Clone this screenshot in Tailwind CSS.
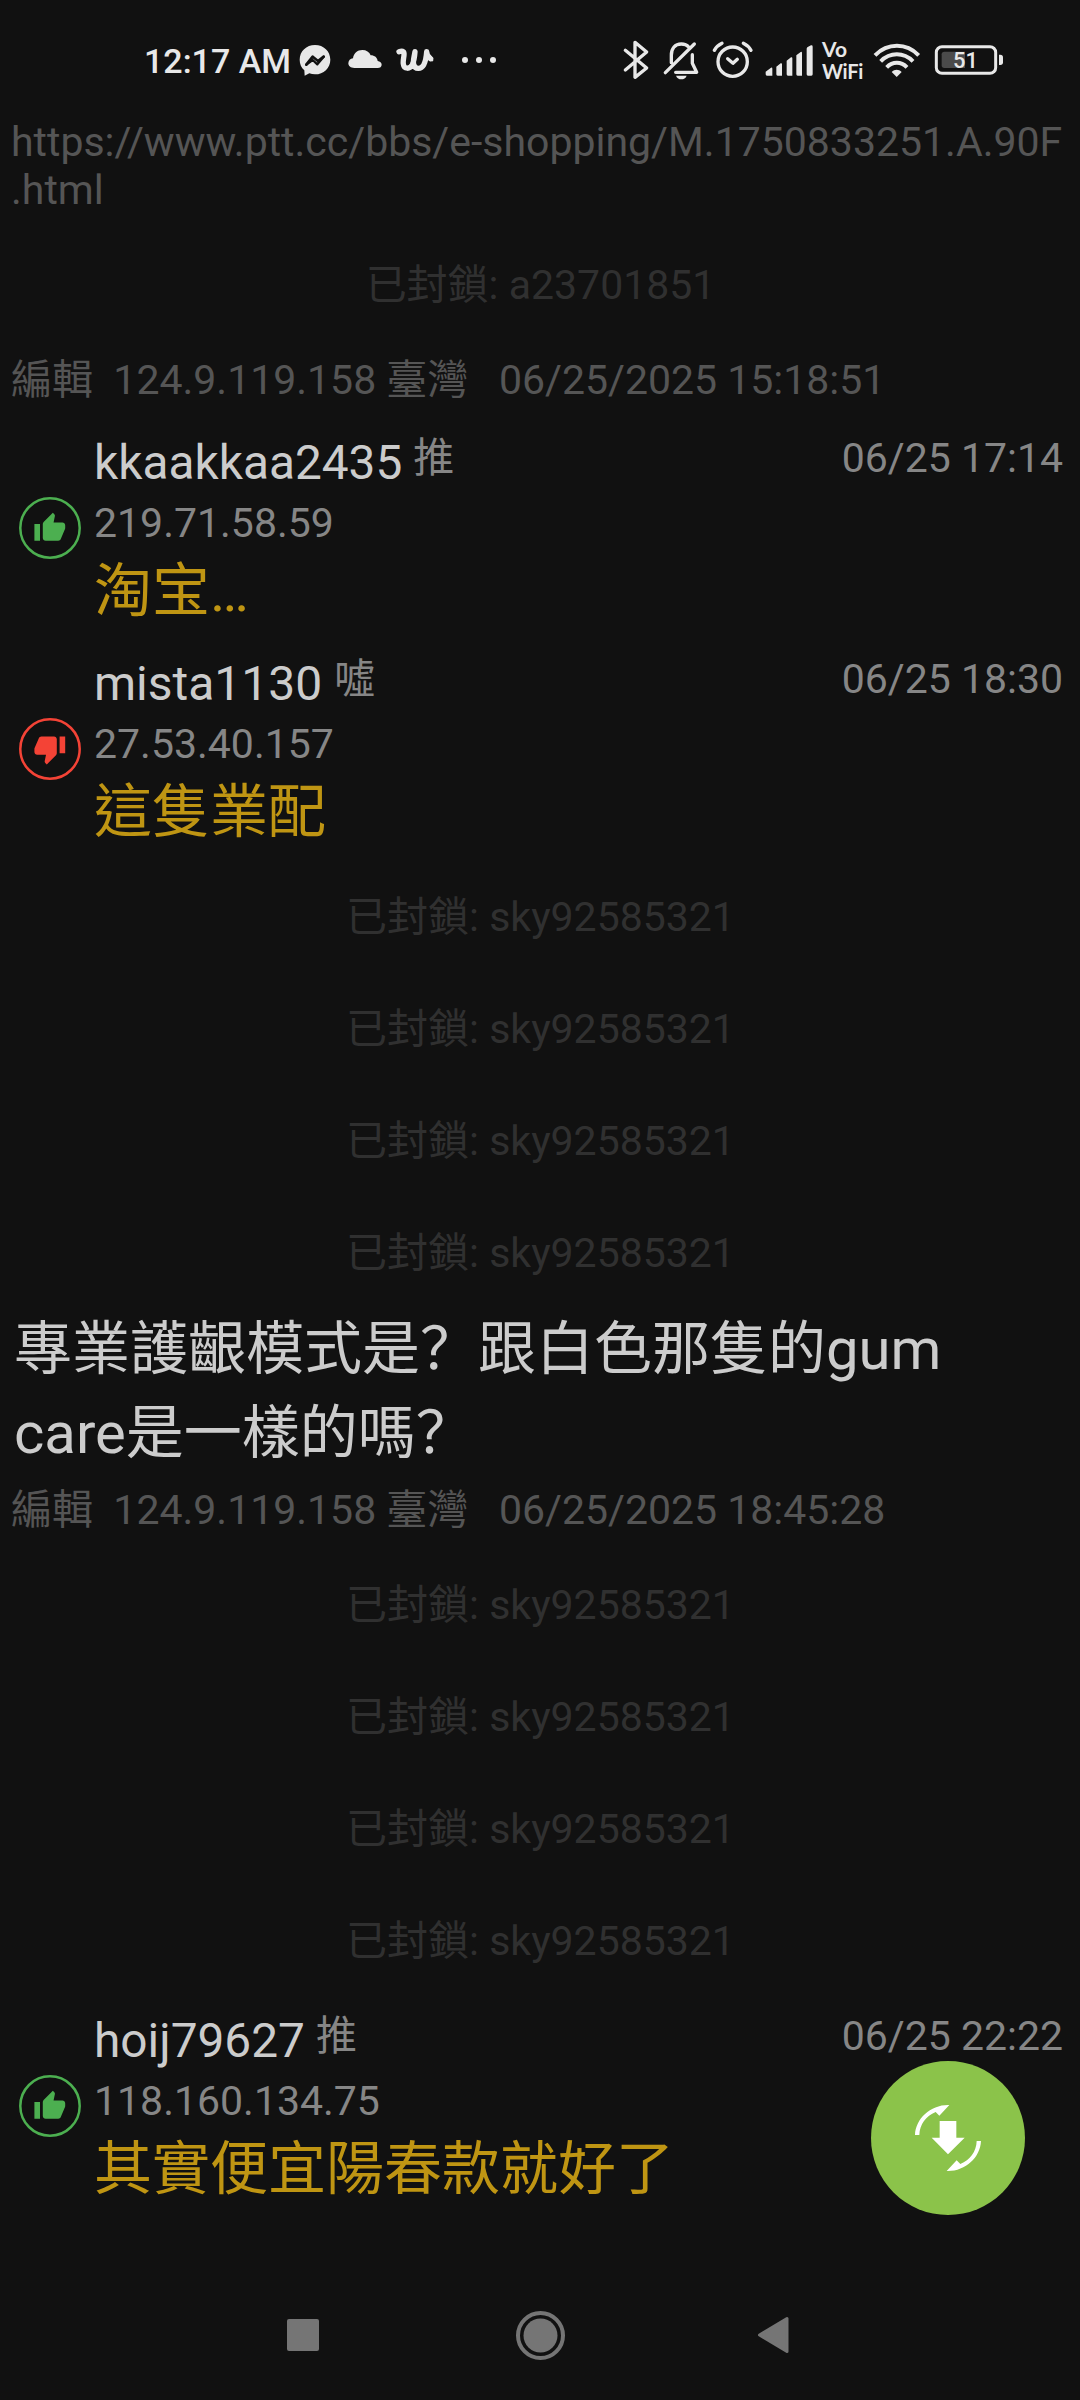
<!DOCTYPE html>
<html lang="zh-Hant">
<head>
<meta charset="utf-8">
<title>PTT</title>
<script src="https://cdn.jsdelivr.net/npm/@tailwindcss/browser@4"></script>
</head>
<body class="bg-[#111111]">
<div class="relative flex h-[2400px] w-[1080px] flex-col overflow-hidden bg-[#111111] font-[Roboto,'Noto_Sans_CJK_TC',sans-serif] text-[41px] text-[#868686]">

  <!-- status bar -->
  <header class="flex h-[100px] shrink-0 items-start pt-5 pl-[144px] text-[#e8e8e8]">
    <span class="w-[154px] pt-px text-[34px] leading-[80px] font-medium whitespace-nowrap">12:17 AM</span>
    <svg class="h-20 w-[34px]" viewBox="504 0 102 240" fill="currentColor"><path d="M555 75c-26 0-46 19-46 44 0 13 5 24 14 32l1 16 14-7c5 2 11 3 17 3 26 0 46-19 46-44s-20-44-46-44z"/><path d="M529 134l19-24 16 13 17-13" fill="none" stroke="#111" stroke-width="8" stroke-linejoin="round" stroke-linecap="round"/><path d="M529 134l19-14 14 13 19-23" fill="none" stroke="#111" stroke-width="7" stroke-linejoin="round" stroke-linecap="round"/></svg>
    <svg class="ml-3.5 h-20 w-[38px]" viewBox="648 0 114 240" fill="currentColor"><path d="M673 144c-11 0-18-6-18-14s6-14 14-15c2-15 13-25 28-25 12 0 21 6 25 16 12 0 20 7 21 17 7 1 12 5 12 11s-5 10-12 10z"/></svg>
    <svg class="ml-3 h-20 w-[38px]" viewBox="798 0 114 240" fill="none" stroke="currentColor" stroke-linecap="round" stroke-linejoin="round"><path d="M807 95q14-5 15 5c1 12-4 20-2 32 2 17 20 16 27 2 5-11 7-24 8-39-2 15-7 25-4 38 4 16 22 16 30 2 6-11 8-25 9-40 0 9 4 16 12 21" stroke-width="16"/><path d="M902 112l4 8" stroke-width="8"/></svg>
    <svg class="ml-[26px] h-20 w-[38px]" viewBox="990 0 114 240" fill="currentColor"><circle cx="1005" cy="120" r="9"/><circle cx="1047" cy="120" r="9"/><circle cx="1089" cy="120" r="9"/></svg>

    <svg class="ml-[124px] h-20 w-7" viewBox="66 0 84 240" fill="none" stroke="currentColor" stroke-width="10" stroke-linejoin="round" stroke-linecap="round"><path d="M76 91l64 53-35 28V67l35 29-64 54"/></svg>
    <svg class="ml-3 h-20 w-[38px]" viewBox="186 0 114 240" fill="none" stroke="currentColor" stroke-width="10" stroke-linejoin="round" stroke-linecap="round"><path d="M283 72l-87 86M214 128v-22c0-20 11-34 30-34 10 0 17 3 22 9M277 104v26l13 27h-63"/><path d="M228 167h32c-3 8-9 11-16 11s-13-3-16-11z" fill="currentColor" stroke="none"/></svg>
    <svg class="ml-[11px] h-20 w-[43px]" viewBox="333 0 129 240" fill="none" stroke="currentColor" stroke-width="10" stroke-linecap="round" stroke-linejoin="round"><circle cx="398" cy="125" r="44"/><path d="M383 116l16 14 13-12"/><path d="M343 91c5-9 13-16 23-21M453 91c-5-9-13-16-23-21"/></svg>
    <svg class="ml-2.5 h-20 w-[50px]" viewBox="492 0 150 240" fill="currentColor"><path d="M497 155l16-12q4-2 4 3v21h-16q-4 0-4-4zM529 140l13-10q4-2 4 3v34h-13q-4 0-4-4zM560 122l13-10q4-2 4 3v52h-13q-4 0-4-4zM589 106l13-10q4-2 4 3v68h-13q-4 0-4-4zM620 86q0-3 3-5l10-5q5-1 5 4v83q0 4-4 4h-10q-4 0-4-4z"/></svg>
    <div class="ml-2 w-[50px] pt-[18px] font-[Lato,sans-serif] text-[21px] leading-[22px] font-bold"><div>Vo</div><div class="text-[20px] tracking-[-0.3px]">WiFi</div></div>
    <svg class="h-20 w-[50px]" viewBox="816 0 150 240" fill="none" stroke="currentColor" stroke-width="12"><path d="M825 106c38-38 94-38 131 0M842 124c28-28 69-28 97 0M860 142c18-18 43-18 61 0"/><path d="M890 171l-15-15c9-9 21-9 30 0z" fill="currentColor" stroke="none"/></svg>
    <div class="relative ml-[11px] h-20 w-[72px]">
      <svg class="h-20 w-[72px]" viewBox="999 0 216 240" fill="none"><rect x="1009" y="80" width="178" height="80" rx="17" stroke="currentColor" stroke-width="9"/><path d="M1033 95h62v49h-62q-8 0-8-8v-33q0-8 8-8z" fill="#4b4b4b"/><path d="M1197 104h4q8 0 8 8v15q0 8-8 8h-4z" fill="currentColor"/></svg>
      <span class="absolute inset-y-0 left-[20px] text-[22px] leading-[82px] font-medium">51</span>
    </div>
  </header>

  <main class="flex flex-col">
    <p class="h-[131px] pt-[18px] pl-[11px] leading-12 whitespace-nowrap text-[#555555]">https://www.ptt.cc/bbs/e-shopping/M.1750833251.A.90F<br>.html</p>
    <p class="h-28 pl-px text-center leading-[108px] text-[#303030]">已封鎖: a23701851</p>
    <p class="h-[78px] pt-[13px] pl-[11px] leading-12 whitespace-pre text-[#555555]">編輯  124.9.119.158 臺灣   06/25/2025 15:18:51</p>

    <article class="flex h-[221px] pr-[17px] pl-[19px]">
      <svg class="mt-[76px] size-[62px] text-[#4caf50]" viewBox="0 0 62 62" fill="currentColor"><circle cx="31" cy="31" r="29.7" fill="none" stroke="currentColor" stroke-width="2.5"/><path transform="translate(14 14.300) scale(1.4)" d="M1 21h4V9H1v12zm22-11c0-1.1-.9-2-2-2h-6.31l.95-4.57.03-.32c0-.41-.17-.79-.44-1.06L14.17 1 7.59 7.59C7.22 7.95 7 8.45 7 9v10c0 1.1.9 2 2 2h9c.83 0 1.54-.5 1.84-1.22l3.02-7.05c.09-.23.14-.47.14-.73v-2z"/></svg>
      <div class="ml-[13px] flex-1">
        <div class="flex items-start pt-[13px]"><span class="pt-px text-[47.800px] leading-14 text-[#cccccc]">kkaakkaa2435</span><span class="ml-[11px] leading-12">推</span><time class="ml-auto leading-12">06/25 17:14</time></div>
        <p class="mt-2 leading-12">219.71.58.59</p>
        <p class="mt-2.5 text-[58px] leading-[68px] text-[#bf9513]">淘宝…</p>
      </div>
    </article>
    <article class="flex h-[221px] pr-[17px] pl-[19px]">
      <svg class="mt-[76px] size-[62px] text-[#f44336]" viewBox="0 0 62 62" fill="currentColor"><circle cx="31" cy="31" r="29.7" fill="none" stroke="currentColor" stroke-width="2.5"/><path transform="translate(14 14.300) scale(1.4)" d="M15 3H6c-.83 0-1.54.5-1.84 1.22l-3.02 7.05c-.09.23-.14.47-.14.73v2c0 1.1.9 2 2 2h6.31l-.95 4.57-.03.32c0 .41.17.79.44 1.06L9.83 23l6.59-6.59c.36-.36.58-.86.58-1.41V5c0-1.1-.9-2-2-2zm4 0v12h4V3h-4z"/></svg>
      <div class="ml-[13px] flex-1">
        <div class="flex items-start pt-[13px]"><span class="pt-px text-[48px] leading-14 text-[#cccccc]">mista1130</span><span class="ml-3 leading-12">噓</span><time class="ml-auto leading-12">06/25 18:30</time></div>
        <p class="mt-2 leading-12">27.53.40.157</p>
        <p class="mt-2.5 text-[58px] leading-[68px] text-[#bf9513]">這隻業配</p>
      </div>
    </article>

    <p class="h-28 pl-px text-center leading-[108px] text-[#303030]">已封鎖: sky92585321</p>
    <p class="h-28 pl-px text-center leading-[108px] text-[#303030]">已封鎖: sky92585321</p>
    <p class="h-28 pl-px text-center leading-[108px] text-[#303030]">已封鎖: sky92585321</p>
    <p class="h-28 pl-px text-center leading-[108px] text-[#303030]">已封鎖: sky92585321</p>

    <p class="-mt-1 h-[166px] pl-[14px] text-[58px] leading-[84px] whitespace-nowrap text-[#cccccc]">專業護齦模式是<span lang="zh-Hans" class="font-['Noto_Sans_CJK_SC'] leading-none">？</span>跟白色那隻的gum<br>care是一樣的嗎<span lang="zh-Hans" class="font-['Noto_Sans_CJK_SC'] leading-none">？</span></p>
    <p class="h-[78px] pt-[13px] pl-[11px] leading-12 whitespace-pre text-[#555555]">編輯  124.9.119.158 臺灣   06/25/2025 18:45:28</p>

    <p class="h-28 pl-px text-center leading-[108px] text-[#303030]">已封鎖: sky92585321</p>
    <p class="h-28 pl-px text-center leading-[108px] text-[#303030]">已封鎖: sky92585321</p>
    <p class="h-28 pl-px text-center leading-[108px] text-[#303030]">已封鎖: sky92585321</p>
    <p class="h-28 pl-px text-center leading-[108px] text-[#303030]">已封鎖: sky92585321</p>

    <article class="flex h-[221px] pr-[17px] pl-[19px]">
      <svg class="mt-[76px] size-[62px] text-[#4caf50]" viewBox="0 0 62 62" fill="currentColor"><circle cx="31" cy="31" r="29.7" fill="none" stroke="currentColor" stroke-width="2.5"/><path transform="translate(14 14.300) scale(1.4)" d="M1 21h4V9H1v12zm22-11c0-1.1-.9-2-2-2h-6.31l.95-4.57.03-.32c0-.41-.17-.79-.44-1.06L14.17 1 7.59 7.59C7.22 7.95 7 8.45 7 9v10c0 1.1.9 2 2 2h9c.83 0 1.54-.5 1.84-1.22l3.02-7.05c.09-.23.14-.47.14-.73v-2z"/></svg>
      <div class="ml-[13px] flex-1">
        <div class="flex items-start pt-[13px]"><span class="pt-px text-[47.800px] leading-14 text-[#cccccc]">hoij79627</span><span class="ml-[11px] leading-12">推</span><time class="ml-auto leading-12">06/25 22:22</time></div>
        <p class="mt-2 leading-12">118.160.134.75</p>
        <p class="mt-2.5 text-[58px] leading-[68px] text-[#bf9513]">其實便宜陽春款就好了</p>
      </div>
    </article>
  </main>

  <!-- floating refresh button -->
  <button class="absolute top-[2061px] left-[871px] size-[154px] rounded-full bg-[#8bc34a] text-white">
    <svg class="size-full" viewBox="0 0 462 462" fill="currentColor"><path d="M206 180h50v50h25l-50 50-49-50h24z"/><path id="arc" d="M132 222C134 172 180 130 235 132L205 164L194 153C165 165 146 190 145 222Z"/><use href="#arc" transform="rotate(180 231 231)"/></svg>
  </button>

  <!-- navigation bar -->
  <nav class="mt-auto flex h-[130px] shrink-0 items-center pl-[287px] text-[#757575]">
    <span class="size-8 rounded-xs bg-current"></span>
    <svg class="ml-[197px] size-[49px]" viewBox="0 0 49 49"><circle cx="24.5" cy="24.5" r="22.5" fill="none" stroke="currentColor" stroke-width="4"/><circle cx="24.5" cy="24.5" r="17" fill="currentColor"/></svg>
    <svg class="ml-[192px] h-[38px] w-8" viewBox="0 0 32 38" fill="currentColor" stroke="currentColor" stroke-width="3" stroke-linejoin="round"><path d="M2.500 19L30 2.500V35.500z"/></svg>
  </nav>
</div>
</body>
</html>
